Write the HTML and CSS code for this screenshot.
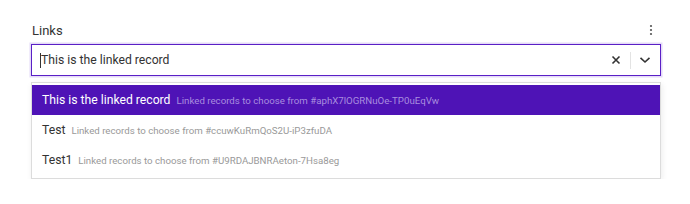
FILE: index.html
```html
<!DOCTYPE html>
<html lang="en">
  <head>
    <meta charset="UTF-8" />
    <meta name="viewport" content="width=device-width, initial-scale=1.0" />
    <title>Links</title>
    <link rel="stylesheet" href="styles.css">
  </head>
  <body>
    <div class="field">
      <div class="field-header">
        <label for="links">Links</label>
        <button class="menu-btn" type="button" aria-label="More">
          <svg width="4" height="12" viewBox="0 0 4 12">
            <circle cx="2" cy="2" r="1.1" fill="#555" />
            <circle cx="2" cy="6" r="1.1" fill="#555" />
            <circle cx="2" cy="10" r="1.1" fill="#555" />
          </svg>
        </button>
      </div>
      <div class="select">
        <input type="text" id="links" value="This is the linked record" />
        <span class="caret"></span>
        <div class="select-actions">
          <button class="icon-btn" type="button" aria-label="Clear">
            <svg width="10" height="10" viewBox="0 0 10 10">
              <path d="M1.5 1.5 L8.5 8.5 M8.5 1.5 L1.5 8.5" stroke="#333" stroke-width="1.6" fill="none" />
            </svg>
          </button>
          <span class="divider"></span>
          <button class="icon-btn" type="button" aria-label="Open">
            <svg width="12" height="8" viewBox="0 0 12 8">
              <path d="M1.5 1.8 L6 6 L10.5 1.8" stroke="#333" stroke-width="1.6" fill="none" />
            </svg>
          </button>
        </div>
      </div>
      <ul class="options">
        <li class="option active">
          <span class="option-title">This is the linked record</span>
          <span class="option-meta">Linked records to choose from #aphX7lOGRNuOe-TP0uEqVw</span>
        </li>
        <li class="option">
          <span class="option-title">Test</span>
          <span class="option-meta">Linked records to choose from #ccuwKuRmQoS2U-iP3zfuDA</span>
        </li>
        <li class="option">
          <span class="option-title">Test1</span>
          <span class="option-meta">Linked records to choose from #U9RDAJBNRAeton-7Hsa8eg</span>
        </li>
      </ul>
    </div>
  </body>
</html>
```

FILE: styles.css
```css
body {
  margin: 0;
  font-family: Roboto, "Liberation Sans", Arial, sans-serif;
  background-color: #fff;
  color: #333;
}

.field {
  width: 630px;
  padding: 19px 0 0 31px;
}

.field-header {
  display: flex;
  justify-content: space-between;
  align-items: center;
  height: 22px;
  margin-bottom: 3px;
}

.field-header label {
  font-size: 13px;
  color: #333;
  padding-left: 1px;
}

.menu-btn {
  border: none;
  background: none;
  padding: 0;
  margin-right: 8px;
  display: flex;
  cursor: pointer;
}

.select {
  position: relative;
  display: flex;
  align-items: center;
  height: 32px;
  box-sizing: border-box;
  border: 1px solid #5a20c6;
  box-shadow: 0 0 0 1.5px #e4daf7;
  background-color: #fff;
}

.select input {
  flex: 1;
  border: none;
  outline: none;
  font-family: inherit;
  font-size: 12.2px;
  color: #333;
  padding: 0 0 0 9px;
  height: 100%;
  background: none;
}

.caret {
  position: absolute;
  left: 8px;
  top: 8px;
  width: 1px;
  height: 15px;
  background-color: #333;
}

.select-actions {
  display: flex;
  align-items: center;
  padding-right: 8px;
}

.icon-btn {
  border: none;
  background: none;
  padding: 0;
  width: 14px;
  height: 14px;
  display: flex;
  align-items: center;
  justify-content: center;
  cursor: pointer;
}

.divider {
  width: 1px;
  height: 17px;
  background-color: #e3e3e3;
  margin: 0 7px;
}

.options {
  list-style: none;
  margin: 6px 0 0;
  padding: 2px 0 3px;
  border: 1px solid #dcdcdc;
  box-shadow: 1px 2px 6px rgba(0, 0, 0, 0.08);
  background-color: #fff;
}

.option {
  display: flex;
  align-items: center;
  height: 30px;
  padding-left: 10px;
  cursor: pointer;
}

.option-title {
  font-size: 12.2px;
  color: #333;
  margin-right: 6px;
}

.option-meta {
  font-size: 9.7px;
  color: #999;
}

.option.active {
  background-color: #4e13b6;
}

.option.active .option-title {
  color: #fff;
}

.option.active .option-meta {
  color: #a98ddf;
}
```
